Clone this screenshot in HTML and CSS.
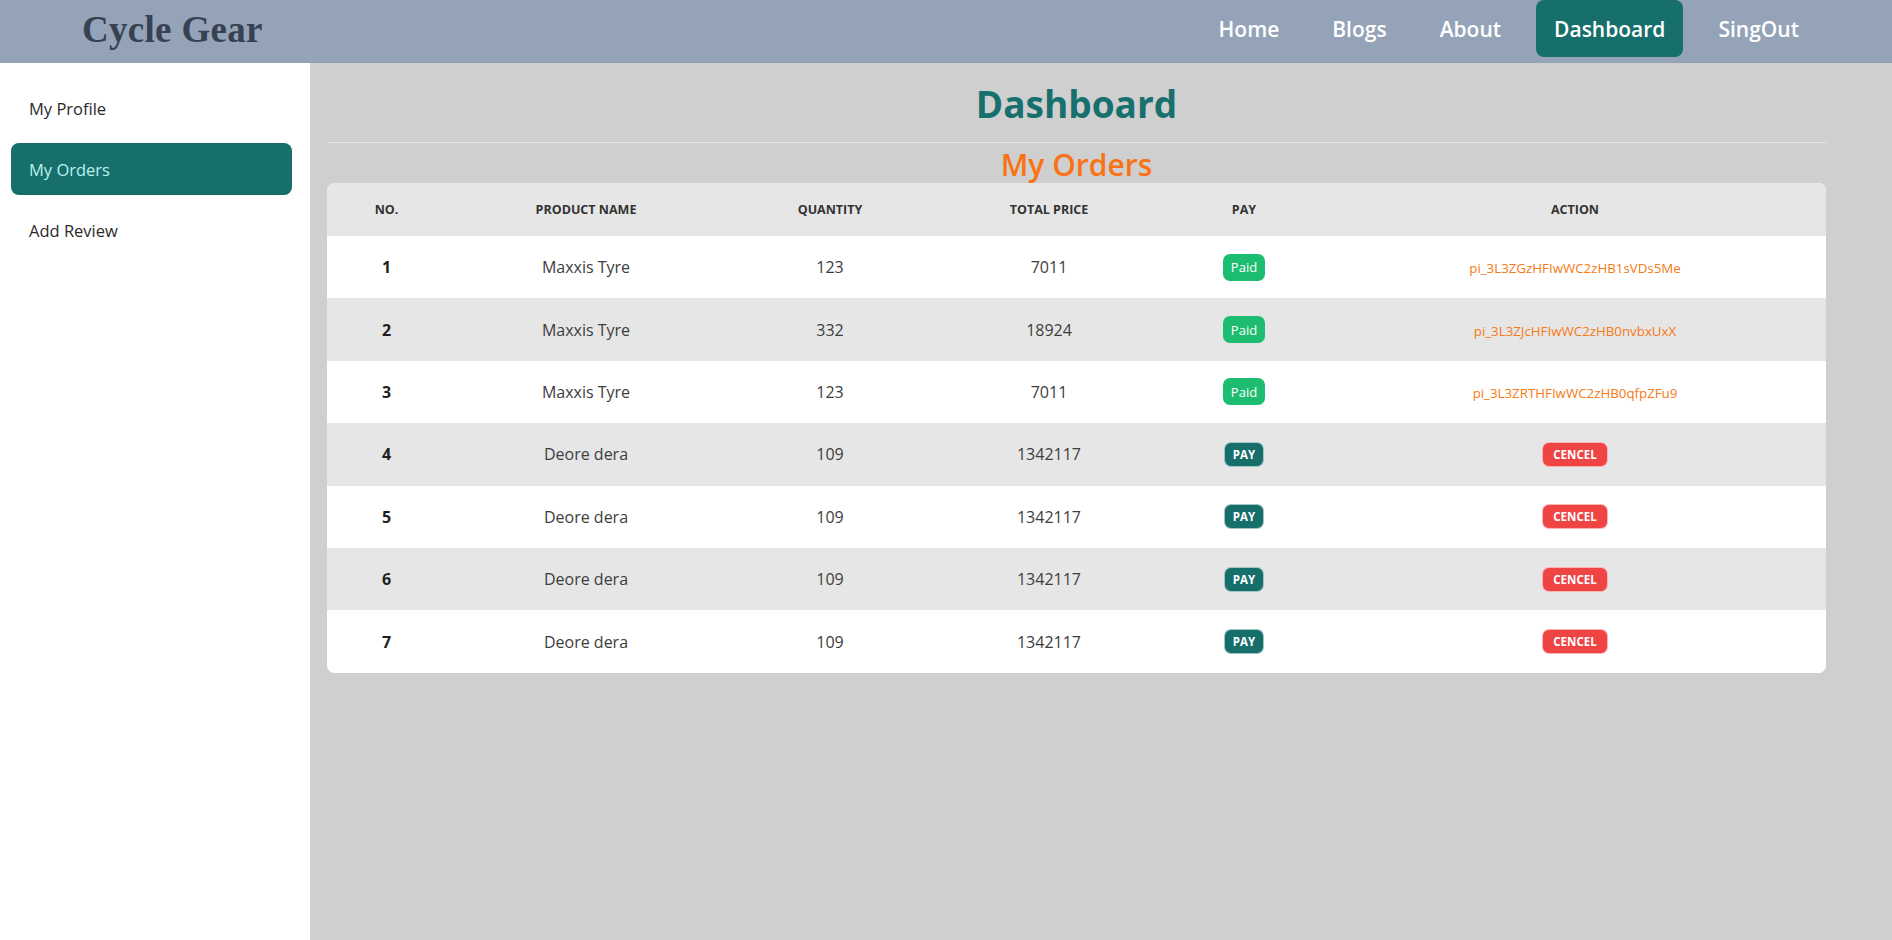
FILE: index.html
```html
<!DOCTYPE html>
<html lang="en">
<head>
<meta charset="utf-8">
<title>Cycle Gear - Dashboard</title>
<link rel="stylesheet" href="styles.css">
</head>
<body>
<header class="navbar">
  <a class="logo" href="#">Cycle Gear</a>
  <nav class="nav-links">
    <a class="nav-link" href="#">Home</a>
    <a class="nav-link" href="#">Blogs</a>
    <a class="nav-link" href="#">About</a>
    <a class="nav-link active" href="#">Dashboard</a>
    <a class="nav-link" href="#">SingOut</a>
  </nav>
</header>
<div class="layout">
  <aside class="sidebar">
    <a class="side-item" href="#">My Profile</a>
    <a class="side-item active" href="#">My Orders</a>
    <a class="side-item" href="#">Add Review</a>
  </aside>
  <main class="content">
    <h1 class="page-title">Dashboard</h1>
    <hr class="divider">
    <h2 class="section-title">My Orders</h2>
    <div class="table-wrap">
      <table class="orders">
        <colgroup>
          <col class="c-no"><col class="c-name"><col class="c-qty"><col class="c-price"><col class="c-pay"><col class="c-action">
        </colgroup>
        <thead>
          <tr><th>No.</th><th>Product Name</th><th>Quantity</th><th>Total Price</th><th>Pay</th><th>Action</th></tr>
        </thead>
        <tbody>
          <tr><td class="no">1</td><td>Maxxis Tyre</td><td>123</td><td>7011</td><td><span class="badge paid">Paid</span></td><td><span class="txid">pi_3L3ZGzHFIwWC2zHB1sVDs5Me</span></td></tr>
          <tr class="alt"><td class="no">2</td><td>Maxxis Tyre</td><td>332</td><td>18924</td><td><span class="badge paid">Paid</span></td><td><span class="txid">pi_3L3ZJcHFIwWC2zHB0nvbxUxX</span></td></tr>
          <tr><td class="no">3</td><td>Maxxis Tyre</td><td>123</td><td>7011</td><td><span class="badge paid">Paid</span></td><td><span class="txid">pi_3L3ZRTHFIwWC2zHB0qfpZFu9</span></td></tr>
          <tr class="alt"><td class="no">4</td><td>Deore dera</td><td>109</td><td>1342117</td><td><button class="btn pay">Pay</button></td><td><button class="btn cancel">Cencel</button></td></tr>
          <tr><td class="no">5</td><td>Deore dera</td><td>109</td><td>1342117</td><td><button class="btn pay">Pay</button></td><td><button class="btn cancel">Cencel</button></td></tr>
          <tr class="alt"><td class="no">6</td><td>Deore dera</td><td>109</td><td>1342117</td><td><button class="btn pay">Pay</button></td><td><button class="btn cancel">Cencel</button></td></tr>
          <tr><td class="no">7</td><td>Deore dera</td><td>109</td><td>1342117</td><td><button class="btn pay">Pay</button></td><td><button class="btn cancel">Cencel</button></td></tr>
        </tbody>
      </table>
    </div>
  </main>
</div>
</body>
</html>
```

FILE: styles.css
```css
* { box-sizing: border-box; }

html, body {
  margin: 0;
  padding: 0;
}

body {
  font-family: "Open Sans", "Noto Sans", sans-serif;
  background: #cfcfcf;
  color: #3a3a3a;
  min-height: 100vh;
}

a { text-decoration: none; }

/* ---------- Navbar ---------- */
.navbar {
  height: 63px;
  background: #94a3b8;
  display: flex;
  align-items: flex-start;
  justify-content: space-between;
  padding: 0 75px 0 82px;
}

.logo {
  height: 59px;
  display: flex;
  align-items: center;
  font-family: "Liberation Serif", "Times New Roman", serif;
  font-weight: 700;
  font-size: 37px;
  color: #374151;
  letter-spacing: 0.3px;
}

.nav-links {
  display: flex;
  gap: 17px;
}

.nav-link {
  height: 57px;
  display: flex;
  align-items: center;
  padding: 0 18px;
  border-radius: 8px;
  color: #ffffff;
  font-size: 21px;
  font-weight: 600;
}

.nav-link.active {
  background: #176f6b;
}

/* ---------- Layout ---------- */
.layout {
  display: flex;
  min-height: calc(100vh - 63px);
}

.sidebar {
  width: 310px;
  flex: none;
  background: #ffffff;
  padding: 19px 18px 0 11px;
  display: flex;
  flex-direction: column;
  gap: 9px;
}

.side-item {
  height: 52px;
  display: flex;
  align-items: center;
  padding: 0 18px;
  border-radius: 8px;
  font-size: 16.5px;
  color: #2a2a2a;
}

.side-item.active {
  background: #176f6b;
  color: #b9f3ef;
}

.content {
  flex: 1;
  background: #cfcfcf;
  padding: 18px 66px 0 17px;
}

.page-title {
  margin: 0;
  text-align: center;
  font-size: 37px;
  line-height: 46px;
  font-weight: 700;
  color: #17706d;
}

.divider {
  margin: 15px 0 0 0;
  border: 0;
  border-top: 1px solid #e4e4e4;
  height: 0;
}

.section-title {
  margin: 4px 0 0 0;
  text-align: center;
  font-size: 30px;
  line-height: 36px;
  font-weight: 600;
  color: #f97316;
}

/* ---------- Table ---------- */
.table-wrap {
  border-radius: 8px;
  overflow: hidden;
  background: #ffffff;
}

.orders {
  width: 100%;
  border-collapse: collapse;
  table-layout: fixed;
}

.c-no { width: 119px; }
.c-name { width: 280px; }
.c-qty { width: 208px; }
.c-price { width: 230px; }
.c-pay { width: 160px; }

.orders thead tr {
  height: 53px;
  background: #e6e6e6;
}

.orders th {
  padding: 0 16px;
  font-size: 12.5px;
  font-weight: 700;
  text-transform: uppercase;
  color: #333333;
  text-align: center;
}

.orders tbody tr {
  height: 62.4px;
  background: #ffffff;
}

.orders tbody tr.alt {
  background: #e6e6e6;
}

.orders td {
  padding: 0 16px;
  text-align: center;
  font-size: 16px;
  color: #3d3d3d;
}

.orders td.no {
  font-weight: 700;
  color: #1f1f1f;
}

.badge {
  display: inline-flex;
  align-items: center;
  justify-content: center;
  height: 27px;
  padding: 0 8px;
  border-radius: 7px;
  font-size: 13px;
  font-weight: 500;
  color: #ffffff;
  vertical-align: middle;
}

.badge.paid {
  background: #1dbd71;
}

.txid {
  font-size: 13.3px;
  color: #f57a14;
}

.btn {
  display: inline-flex;
  align-items: center;
  justify-content: center;
  height: 25px;
  padding: 0 8px;
  border: 1px solid rgba(255,255,255,0.6);
  border-radius: 7px;
  font-family: "Open Sans", "Noto Sans", sans-serif;
  font-size: 11.5px;
  font-weight: 700;
  text-transform: uppercase;
  color: #ffffff;
  cursor: pointer;
  vertical-align: middle;
}

.btn.pay { background: #176f6b; }
.btn.cancel { background: #ef4444; padding: 0 10px; }
```
